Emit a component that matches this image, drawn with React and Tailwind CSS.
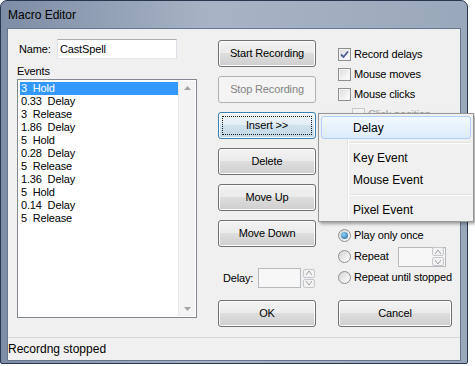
const events = [
  '3  Hold',
  '0.33  Delay',
  '3  Release',
  '1.86  Delay',
  '5  Hold',
  '0.28  Delay',
  '5  Release',
  '1.36  Delay',
  '5  Hold',
  '0.14  Delay',
  '5  Release',
]

function Button({ children, disabled, focused }) {
  if (disabled) {
    return (
      <div className="h-[27px] rounded-[3px] border border-[#adb2b5] bg-[#f4f4f4] text-[11px] text-[#838383] flex items-center justify-center">
        {children}
      </div>
    )
  }
  if (focused) {
    return (
      <div className="relative h-[27px] rounded-[3px] border border-[#3c7fb1] bg-[linear-gradient(#eef5f9_0%,#e2eef5_49%,#cfe2ed_50%,#c3d8e6_100%)] shadow-[inset_0_0_0_1px_#f4fafd] text-[11px] text-black flex items-center justify-center">
        <span className="absolute inset-[3px] border border-dotted border-[#1b1b1b]" />
        {children}
      </div>
    )
  }
  return (
    <div className="h-[27px] rounded-[3px] border border-[#707070] bg-[linear-gradient(#f2f2f2_0%,#ebebeb_49%,#dddddd_50%,#cfcfcf_100%)] shadow-[inset_0_0_0_1px_#fcfcfc] text-[11px] text-black flex items-center justify-center">
      {children}
    </div>
  )
}

function CheckBox({ checked, disabled, label }) {
  return (
    <div className="h-[20px] flex items-center gap-[3px]">
      <span className={disabled
        ? 'w-[13px] h-[13px] border border-[#c8c8c8] bg-[#f4f4f4]'
        : 'w-[13px] h-[13px] border border-[#8e8f8f] bg-[linear-gradient(135deg,#dcdcdc,#ffffff)] shadow-[inset_0_0_0_1px_#f4f4f4] flex items-center justify-center'}>
        {checked && (
          <svg width="9" height="9" viewBox="0 0 9 9">
            <path d="M1 4.5 L3.5 7 L8 1.5" fill="none" stroke="#4a5f97" strokeWidth="1.8" />
          </svg>
        )}
      </span>
      <span className={disabled ? 'text-[#a0a0a0]' : 'text-black'}>{label}</span>
    </div>
  )
}

function Radio({ checked, label }) {
  return (
    <div className="h-[21px] flex items-center gap-[3px]">
      <span className="w-[13px] h-[13px] rounded-full border border-[#8e8f8f] bg-[linear-gradient(135deg,#d4d4d4,#ffffff)] flex items-center justify-center">
        {checked && <span className="w-[7px] h-[7px] rounded-full bg-[radial-gradient(circle_at_40%_35%,#8fd3ff,#1e5f8e)]" />}
      </span>
      <span>{label}</span>
    </div>
  )
}

function Spin() {
  return (
    <div className="flex flex-col gap-[1px]">
      <span className="w-[12px] h-[9px] rounded-[2px] border border-[#c4c8cc] bg-[#f2f2f2] flex items-center justify-center">
        <svg width="6" height="4" viewBox="0 0 6 4"><path d="M0 4 L3 0 L6 4" fill="none" stroke="#a0a0a0" /></svg>
      </span>
      <span className="w-[12px] h-[9px] rounded-[2px] border border-[#c4c8cc] bg-[#f2f2f2] flex items-center justify-center">
        <svg width="6" height="4" viewBox="0 0 6 4"><path d="M0 0 L3 4 L6 0" fill="none" stroke="#a0a0a0" /></svg>
      </span>
    </div>
  )
}

function MenuItem({ children, active }) {
  return (
    <div className={active
      ? 'h-[23px] mx-[2px] pl-[31px] flex items-center rounded-[3px] border border-[#aecff7] bg-[linear-gradient(#f2f8fe,#dcebfc)]'
      : 'h-[22px] mx-[2px] pl-[32px] flex items-center'}>
      {children}
    </div>
  )
}

export default function App() {
  return (
    <div className="relative w-[475px] h-[366px] bg-white overflow-hidden text-black [font-family:'Liberation_Sans',Arial,sans-serif]">
      <div className="w-[468px] h-[364px] rounded-t-[7px] rounded-b-[2px] border border-[#27374f] bg-[linear-gradient(90deg,#7d8da5,#a8b4c5_45%,#9aa8bb)] flex flex-col">
        <div className="h-[27px] pl-[7px] flex items-center text-[12px]">Macro Editor</div>
        <div className="flex-1 mx-[6px] mb-[2px] border border-[#66768e] bg-[#f0f0f0] flex flex-col text-[11px] tracking-[-0.15px]">
          <div className="h-[308px] flex pl-[9px] pt-[10px]">
            <div className="w-[180px] flex flex-col">
              <div className="h-[20px] flex items-center">
                <span className="ml-[2px] w-[38px]">Name:</span>
                <div className="w-[120px] h-[20px] border border-[#abadb3] border-x-[#dbdfe6] border-b-[#e3e9ef] bg-white pl-[2px] flex items-center">CastSpell</div>
              </div>
              <div className="mt-[6px] leading-[13px]">Events</div>
              <div className="mt-[1px] h-[239px] border border-[#828790] bg-white flex p-[1px]">
                <div className="flex-1 pt-[1px] pl-[1px]">
                  {events.map((e, i) => (
                    <div key={i} className={i === 0
                      ? 'h-[13px] leading-[13px] pl-[1px] whitespace-pre bg-[#3399ff] text-white'
                      : 'h-[13px] leading-[13px] pl-[1px] whitespace-pre'}>
                      {e}
                    </div>
                  ))}
                </div>
                <div className="w-[17px] bg-[#f3f3f3] border-l border-[#e8e8e8] flex flex-col justify-between items-center py-[5px]">
                  <svg width="7" height="4" viewBox="0 0 7 4"><path d="M0 4 L3.5 0 L7 4 Z" fill="#a3a3a3" /></svg>
                  <svg width="7" height="4" viewBox="0 0 7 4"><path d="M0 0 L3.5 4 L7 0 Z" fill="#a3a3a3" /></svg>
                </div>
              </div>
            </div>

            <div className="ml-[21px] mt-[1px] w-[98px] flex flex-col">
              <div className="flex flex-col gap-[9px]">
                <Button>Start Recording</Button>
                <Button disabled>Stop Recording</Button>
                <Button focused>Insert &gt;&gt;</Button>
                <Button>Delete</Button>
                <Button>Move Up</Button>
                <Button>Move Down</Button>
              </div>
              <div className="mt-[21px] h-[20px] flex items-center">
                <span className="ml-[5px] w-[35px]">Delay:</span>
                <div className="w-[43px] h-[20px] border border-[#b5b9bd] bg-[#f7f7f7]" />
                <div className="ml-[2px]"><Spin /></div>
              </div>
              <div className="mt-[12px]"><Button>OK</Button></div>
            </div>

            <div className="ml-[22px] mt-[5px] w-[114px] flex flex-col">
              <CheckBox checked label="Record delays" />
              <CheckBox label="Mouse moves" />
              <CheckBox label="Mouse clicks" />
              <div className="pl-[14px]"><CheckBox disabled label="Click position" /></div>
              <div className="mt-[101px] flex flex-col">
                <Radio checked label="Play only once" />
                <div className="flex items-center">
                  <div className="w-[60px]"><Radio label="Repeat" /></div>
                  <div className="w-[48px] h-[20px] border border-[#b5b9bd] bg-[#f7f7f7] flex justify-end items-center pr-[1px]">
                    <Spin />
                  </div>
                </div>
                <Radio label="Repeat until stopped" />
              </div>
              <div className="mt-[12px]"><Button>Cancel</Button></div>
            </div>
          </div>
          <div className="flex-1 border-t border-[#d7d7d7] flex items-center text-[12px] tracking-normal">
            Recordng stopped
          </div>
        </div>
      </div>

      <div className="absolute left-[318px] top-[113px] w-[156px] h-[109px] border border-[#979797] bg-[#f0f0f0] shadow-[2px_2px_3px_rgba(0,0,0,0.35)] text-[12px] py-[2px]">
        <div className="absolute left-[28px] top-[2px] bottom-[2px] w-[2px] border-l border-[#e2e3e3] bg-white" />
        <div className="relative flex flex-col">
          <MenuItem active>Delay</MenuItem>
          <div className="ml-[31px] mr-[2px] my-[3px] h-[2px] border-t border-[#e0e0e0] bg-white" />
          <MenuItem>Key Event</MenuItem>
          <MenuItem>Mouse Event</MenuItem>
          <div className="ml-[31px] mr-[2px] my-[3px] h-[2px] border-t border-[#e0e0e0] bg-white" />
          <MenuItem>Pixel Event</MenuItem>
        </div>
      </div>
    </div>
  )
}
